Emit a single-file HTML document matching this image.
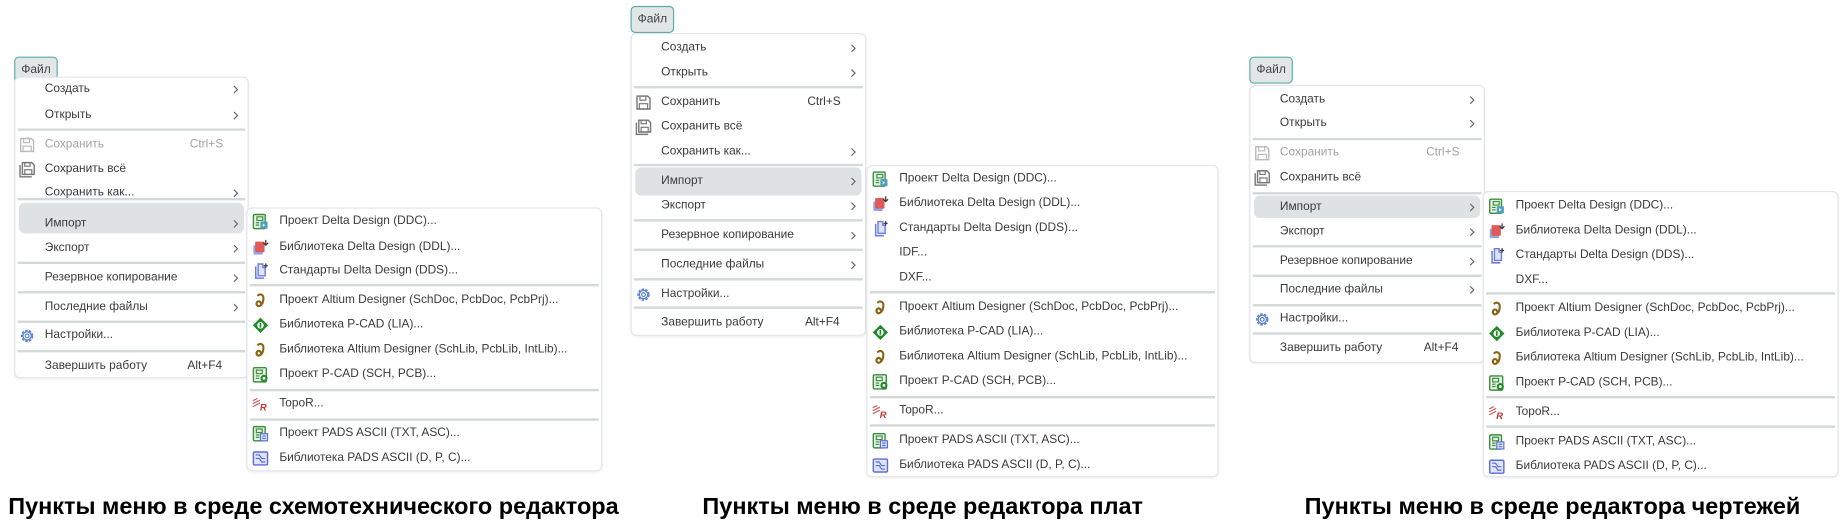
<!DOCTYPE html>
<html><head><meta charset="utf-8">
<style>
*{box-sizing:border-box;margin:0;padding:0}
html,body{width:1848px;height:527px;overflow:hidden;background:#fff}
#w{position:absolute;left:0;top:0;width:1568px;height:447px;transform:scale(1.17857);transform-origin:0 0;font-family:"Liberation Sans",sans-serif;font-size:10.1px;color:#3a3a3a}
.btn{position:absolute;height:23px;border:1.3px solid #5aaea6;border-radius:4px;background:#e2e6e6;font-size:10.2px;line-height:21px;padding:0 5px;color:#444}
.m{position:absolute;background:#fff;border:1px solid #e3e6e7;border-radius:5px;box-shadow:0 1px 2px rgba(0,0,0,.06)}
.i{position:absolute;left:0;right:0;height:16px;line-height:16px;white-space:nowrap}
.t{position:absolute;left:25px}
.s .t{left:27px}
.k{position:absolute}
.c{position:absolute;right:6px;top:4px;width:8px;height:8px}
.ic{position:absolute;left:3px;top:1px;width:14px;height:14px}
.s .ic{left:4px}
.d{color:#a0a3a4}
.sep{position:absolute;left:2px;right:2px;height:2px;background:#d3d8d9}
.hl{position:absolute;left:3px;right:3px;border-radius:5px;background:#dfe2e3}
.cap{position:absolute;top:418px;font-family:"Liberation Sans Narrow","Liberation Sans",sans-serif;font-weight:bold;font-size:19.9px;color:#000;white-space:nowrap;line-height:24px}
</style></head><body>
<svg width="0" height="0" style="position:absolute">
<defs>
<symbol id="chev" viewBox="0 0 8 8"><path d="M2.5 1 L5.5 4 L2.5 7" fill="none" stroke="#666" stroke-width="1"/></symbol>
<symbol id="save" viewBox="0 0 14 14"><path d="M1.5 1.5h9l2 2v9h-11z" fill="none" stroke="#777" stroke-width="1.2"/><rect x="4" y="1.5" width="5" height="3.5" fill="none" stroke="#777"/><rect x="3.5" y="8" width="7" height="4.5" fill="none" stroke="#777"/></symbol>
<symbol id="saved" viewBox="0 0 14 14"><path d="M1.5 1.5h9l2 2v9h-11z" fill="none" stroke="#bbb" stroke-width="1.2"/><rect x="4" y="1.5" width="5" height="3.5" fill="none" stroke="#bbb"/><rect x="3.5" y="8" width="7" height="4.5" fill="none" stroke="#bbb"/></symbol>
<symbol id="saveall" viewBox="0 0 14 14"><path d="M1 3v10h10" fill="none" stroke="#777" stroke-width="1.2"/><path d="M3 1h8l2 2v8h-10z" fill="none" stroke="#777" stroke-width="1.2"/><rect x="5" y="1" width="4.5" height="3" fill="none" stroke="#777"/><rect x="5" y="7" width="6" height="4" fill="none" stroke="#777"/></symbol>
<symbol id="gear" viewBox="0 0 14 14"><circle cx="7" cy="7" r="4.6" fill="none" stroke="#5a7fd6" stroke-width="1.3" stroke-dasharray="2.2 1.1"/><circle cx="7" cy="7" r="3.5" fill="none" stroke="#5a7fd6" stroke-width="1"/><circle cx="7" cy="7" r="1.6" fill="none" stroke="#5a7fd6" stroke-width="1"/></symbol>
<symbol id="ddc" viewBox="0 0 14 14"><rect x="1" y="1" width="10" height="12" rx="1" fill="#e8f3e8" stroke="#3b8f3b" stroke-width="1.2"/><rect x="4" y="3" width="5" height="3" fill="none" stroke="#3b8f3b"/><path d="M3 8h3M3 10h3" stroke="#3b8f3b"/><rect x="7" y="7" width="6" height="6" fill="#4aa0b8"/><path d="M9 8.5l2 1.5-2 1.5z" fill="#fff"/></symbol>
<symbol id="ddl" viewBox="0 0 14 14"><rect x="1" y="5" width="8" height="8" rx="1" fill="#8fa6e8"/><rect x="2.5" y="2" width="8" height="9" rx="1" fill="#e05a5a"/><path d="M11.5 0.5v4M9.5 3l2 2 2-2" stroke="#333" fill="none" stroke-width="1"/></symbol>
<symbol id="dds" viewBox="0 0 14 14"><path d="M3 3v10h7" fill="none" stroke="#6a7fe0" stroke-width="1.3"/><path d="M5 1h4v3h2v7H5z" fill="#dfe4fb" stroke="#6a7fe0" stroke-width="1.2"/><path d="M11.5 0.5v4M9.8 2.5h3.4" stroke="#333" stroke-width="1"/></symbol>
<symbol id="alt" viewBox="0 0 14 14"><path d="M5 2.5c2-1.5 4.5-0.5 4.5 2.5c0 3-1 5.5-3 6.5c-2 1-3.5-1-2.5-3c1-1.5 3-1 3.5 1" fill="none" stroke="#8a6212" stroke-width="1.8" stroke-linecap="round"/></symbol>
<symbol id="pcl" viewBox="0 0 14 14"><path d="M7 0.5L13.5 7 7 13.5 0.5 7z" fill="#1f8a2a"/><circle cx="7" cy="7" r="2.8" fill="#fff"/><rect x="6.3" y="5" width="1.4" height="4" fill="#1f8a2a"/></symbol>
<symbol id="pcp" viewBox="0 0 14 14"><rect x="1" y="1" width="11" height="12" rx="1" fill="#e8f3e8" stroke="#3b8f3b" stroke-width="1.2"/><rect x="3.5" y="3" width="5" height="3" fill="none" stroke="#3b8f3b"/><path d="M3 8h3M3 10h3" stroke="#3b8f3b"/><circle cx="10" cy="10" r="3" fill="#1f8a2a"/><circle cx="10" cy="10" r="1.2" fill="#fff"/></symbol>
<symbol id="topo" viewBox="0 0 14 14"><path d="M0.5 4l4-2M0.5 6.5l6-3M0.5 9l6-3" stroke="#d25a5a" stroke-width="1"/><text x="6.5" y="12.5" font-family="Liberation Sans" font-style="italic" font-weight="bold" font-size="8" fill="#c83030">R</text></symbol>
<symbol id="padp" viewBox="0 0 14 14"><rect x="1" y="1" width="10" height="12" rx="1" fill="#e8f3e8" stroke="#3b8f3b" stroke-width="1.2"/><rect x="3.5" y="3" width="5" height="3" fill="none" stroke="#3b8f3b"/><path d="M3 8h3M3 10h3" stroke="#3b8f3b"/><rect x="7" y="7" width="6" height="6" fill="#dfe4fb" stroke="#5a6fd6"/><path d="M8.5 9h3M8.5 11h3" stroke="#5a6fd6"/></symbol>
<symbol id="padl" viewBox="0 0 14 14"><rect x="1" y="1.5" width="12" height="11" rx="1" fill="#dfe4fb" stroke="#5a6fd6" stroke-width="1.2"/><path d="M3 4h3l2 3h3M3 7h3l2 3h3" fill="none" stroke="#5a6fd6"/></symbol>
</defs></svg>
<div id="w">

<!-- Panel 1 -->
<div class="btn" style="left:12px;top:48px">Файл</div>
<div class="m" style="left:12px;top:65px;width:199px;height:256px">
 <div class="hl" style="top:106px;height:26px"></div>
 <div class="i" style="top:2px"><span class="t">Создать</span><svg class="c"><use href="#chev"/></svg></div>
 <div class="i" style="top:24px"><span class="t">Открыть</span><svg class="c"><use href="#chev"/></svg></div>
 <div class="sep" style="top:43px"></div>
 <div class="i d" style="top:49px"><svg class="ic"><use href="#saved"/></svg><span class="t">Сохранить</span><span class="k" style="left:148px">Ctrl+S</span></div>
 <div class="i" style="top:70px"><svg class="ic"><use href="#saveall"/></svg><span class="t">Сохранить всё</span></div>
 <div class="i" style="top:90px"><span class="t">Сохранить как...</span><svg class="c"><use href="#chev"/></svg></div>
 <div class="sep" style="top:102px"></div>
 <div class="i" style="top:116px"><span class="t">Импорт</span><svg class="c"><use href="#chev"/></svg></div>
 <div class="i" style="top:137px"><span class="t">Экспорт</span><svg class="c"><use href="#chev"/></svg></div>
 <div class="sep" style="top:156px"></div>
 <div class="i" style="top:162px"><span class="t">Резервное копирование</span><svg class="c"><use href="#chev"/></svg></div>
 <div class="sep" style="top:181px"></div>
 <div class="i" style="top:187px"><span class="t">Последние файлы</span><svg class="c"><use href="#chev"/></svg></div>
 <div class="sep" style="top:206px"></div>
 <div class="i" style="top:211px"><svg class="ic"><use href="#gear"/></svg><span class="t">Настройки...</span></div>
 <div class="sep" style="top:231px"></div>
 <div class="i" style="top:237px"><span class="t">Завершить работу</span><span class="k" style="left:146px">Alt+F4</span></div>
</div>
<div class="m s" style="left:209px;top:176px;width:302px;height:224px">
 <div class="i" style="top:3px"><svg class="ic"><use href="#ddc"/></svg><span class="t">Проект Delta Design (DDC)...</span></div>
 <div class="i" style="top:25px"><svg class="ic"><use href="#ddl"/></svg><span class="t">Библиотека Delta Design (DDL)...</span></div>
 <div class="i" style="top:45px"><svg class="ic"><use href="#dds"/></svg><span class="t">Стандарты Delta Design (DDS)...</span></div>
 <div class="sep" style="top:64px"></div>
 <div class="i" style="top:70px"><svg class="ic"><use href="#alt"/></svg><span class="t">Проект Altium Designer (SchDoc, PcbDoc, PcbPrj)...</span></div>
 <div class="i" style="top:91px"><svg class="ic"><use href="#pcl"/></svg><span class="t">Библиотека P-CAD (LIA)...</span></div>
 <div class="i" style="top:112px"><svg class="ic"><use href="#alt"/></svg><span class="t">Библиотека Altium Designer (SchLib, PcbLib, IntLib)...</span></div>
 <div class="i" style="top:133px"><svg class="ic"><use href="#pcp"/></svg><span class="t">Проект P-CAD (SCH, PCB)...</span></div>
 <div class="sep" style="top:153px"></div>
 <div class="i" style="top:158px"><svg class="ic"><use href="#topo"/></svg><span class="t">TopoR...</span></div>
 <div class="sep" style="top:178px"></div>
 <div class="i" style="top:183px"><svg class="ic"><use href="#padp"/></svg><span class="t">Проект PADS ASCII (TXT, ASC)...</span></div>
 <div class="i" style="top:204px"><svg class="ic"><use href="#padl"/></svg><span class="t">Библиотека PADS ASCII (D, P, C)...</span></div>
</div>
<div class="cap" style="left:7px">Пункты меню в среде схемотехнического редактора</div>

<!-- Panel 2 -->
<div class="btn" style="left:535px;top:5px">Файл</div>
<div class="m" style="left:535px;top:28px;width:200px;height:257px">
 <div class="hl" style="top:113px;height:24px"></div>
 <div class="i" style="top:4px"><span class="t">Создать</span><svg class="c"><use href="#chev"/></svg></div>
 <div class="i" style="top:25px"><span class="t">Открыть</span><svg class="c"><use href="#chev"/></svg></div>
 <div class="sep" style="top:44px"></div>
 <div class="i" style="top:50px"><svg class="ic"><use href="#save"/></svg><span class="t">Сохранить</span><span class="k" style="left:149px">Ctrl+S</span></div>
 <div class="i" style="top:71px"><svg class="ic"><use href="#saveall"/></svg><span class="t">Сохранить всё</span></div>
 <div class="i" style="top:92px"><span class="t">Сохранить как...</span><svg class="c"><use href="#chev"/></svg></div>
 <div class="sep" style="top:110px"></div>
 <div class="i" style="top:117px"><span class="t">Импорт</span><svg class="c"><use href="#chev"/></svg></div>
 <div class="i" style="top:138px"><span class="t">Экспорт</span><svg class="c"><use href="#chev"/></svg></div>
 <div class="sep" style="top:157px"></div>
 <div class="i" style="top:163px"><span class="t">Резервное копирование</span><svg class="c"><use href="#chev"/></svg></div>
 <div class="sep" style="top:182px"></div>
 <div class="i" style="top:188px"><span class="t">Последние файлы</span><svg class="c"><use href="#chev"/></svg></div>
 <div class="sep" style="top:207px"></div>
 <div class="i" style="top:213px"><svg class="ic"><use href="#gear"/></svg><span class="t">Настройки...</span></div>
 <div class="sep" style="top:231px"></div>
 <div class="i" style="top:237px"><span class="t">Завершить работу</span><span class="k" style="left:147px">Alt+F4</span></div>
</div>
<div class="m s" style="left:735px;top:140px;width:299px;height:265px">
 <div class="i" style="top:3px"><svg class="ic"><use href="#ddc"/></svg><span class="t">Проект Delta Design (DDC)...</span></div>
 <div class="i" style="top:24px"><svg class="ic"><use href="#ddl"/></svg><span class="t">Библиотека Delta Design (DDL)...</span></div>
 <div class="i" style="top:45px"><svg class="ic"><use href="#dds"/></svg><span class="t">Стандарты Delta Design (DDS)...</span></div>
 <div class="i" style="top:66px"><span class="t">IDF...</span></div>
 <div class="i" style="top:87px"><span class="t">DXF...</span></div>
 <div class="sep" style="top:106px"></div>
 <div class="i" style="top:112px"><svg class="ic"><use href="#alt"/></svg><span class="t">Проект Altium Designer (SchDoc, PcbDoc, PcbPrj)...</span></div>
 <div class="i" style="top:133px"><svg class="ic"><use href="#pcl"/></svg><span class="t">Библиотека P-CAD (LIA)...</span></div>
 <div class="i" style="top:154px"><svg class="ic"><use href="#alt"/></svg><span class="t">Библиотека Altium Designer (SchLib, PcbLib, IntLib)...</span></div>
 <div class="i" style="top:175px"><svg class="ic"><use href="#pcp"/></svg><span class="t">Проект P-CAD (SCH, PCB)...</span></div>
 <div class="sep" style="top:195px"></div>
 <div class="i" style="top:200px"><svg class="ic"><use href="#topo"/></svg><span class="t">TopoR...</span></div>
 <div class="sep" style="top:219px"></div>
 <div class="i" style="top:225px"><svg class="ic"><use href="#padp"/></svg><span class="t">Проект PADS ASCII (TXT, ASC)...</span></div>
 <div class="i" style="top:246px"><svg class="ic"><use href="#padl"/></svg><span class="t">Библиотека PADS ASCII (D, P, C)...</span></div>
</div>
<div class="cap" style="left:596px">Пункты меню в среде редактора плат</div>

<!-- Panel 3 -->
<div class="btn" style="left:1060px;top:48px">Файл</div>
<div class="m" style="left:1060px;top:72px;width:200px;height:236px">
 <div class="hl" style="top:93px;height:19px"></div>
 <div class="i" style="top:4px"><span class="t">Создать</span><svg class="c"><use href="#chev"/></svg></div>
 <div class="i" style="top:24px"><span class="t">Открыть</span><svg class="c"><use href="#chev"/></svg></div>
 <div class="sep" style="top:44px"></div>
 <div class="i d" style="top:49px"><svg class="ic"><use href="#saved"/></svg><span class="t">Сохранить</span><span class="k" style="left:149px">Ctrl+S</span></div>
 <div class="i" style="top:70px"><svg class="ic"><use href="#saveall"/></svg><span class="t">Сохранить всё</span></div>
 <div class="sep" style="top:90px"></div>
 <div class="i" style="top:95px"><span class="t">Импорт</span><svg class="c"><use href="#chev"/></svg></div>
 <div class="i" style="top:116px"><span class="t">Экспорт</span><svg class="c"><use href="#chev"/></svg></div>
 <div class="sep" style="top:135px"></div>
 <div class="i" style="top:141px"><span class="t">Резервное копирование</span><svg class="c"><use href="#chev"/></svg></div>
 <div class="sep" style="top:160px"></div>
 <div class="i" style="top:165px"><span class="t">Последние файлы</span><svg class="c"><use href="#chev"/></svg></div>
 <div class="sep" style="top:185px"></div>
 <div class="i" style="top:190px"><svg class="ic"><use href="#gear"/></svg><span class="t">Настройки...</span></div>
 <div class="sep" style="top:209px"></div>
 <div class="i" style="top:215px"><span class="t">Завершить работу</span><span class="k" style="left:147px">Alt+F4</span></div>
</div>
<div class="m s" style="left:1258px;top:162px;width:302px;height:243px">
 <div class="i" style="top:4px"><svg class="ic"><use href="#ddc"/></svg><span class="t">Проект Delta Design (DDC)...</span></div>
 <div class="i" style="top:25px"><svg class="ic"><use href="#ddl"/></svg><span class="t">Библиотека Delta Design (DDL)...</span></div>
 <div class="i" style="top:46px"><svg class="ic"><use href="#dds"/></svg><span class="t">Стандарты Delta Design (DDS)...</span></div>
 <div class="i" style="top:67px"><span class="t">DXF...</span></div>
 <div class="sep" style="top:85px"></div>
 <div class="i" style="top:91px"><svg class="ic"><use href="#alt"/></svg><span class="t">Проект Altium Designer (SchDoc, PcbDoc, PcbPrj)...</span></div>
 <div class="i" style="top:112px"><svg class="ic"><use href="#pcl"/></svg><span class="t">Библиотека P-CAD (LIA)...</span></div>
 <div class="i" style="top:133px"><svg class="ic"><use href="#alt"/></svg><span class="t">Библиотека Altium Designer (SchLib, PcbLib, IntLib)...</span></div>
 <div class="i" style="top:154px"><svg class="ic"><use href="#pcp"/></svg><span class="t">Проект P-CAD (SCH, PCB)...</span></div>
 <div class="sep" style="top:173px"></div>
 <div class="i" style="top:179px"><svg class="ic"><use href="#topo"/></svg><span class="t">TopoR...</span></div>
 <div class="sep" style="top:198px"></div>
 <div class="i" style="top:204px"><svg class="ic"><use href="#padp"/></svg><span class="t">Проект PADS ASCII (TXT, ASC)...</span></div>
 <div class="i" style="top:225px"><svg class="ic"><use href="#padl"/></svg><span class="t">Библиотека PADS ASCII (D, P, C)...</span></div>
</div>
<div class="cap" style="left:1107px">Пункты меню в среде редактора чертежей</div>

</div>
</body></html>
